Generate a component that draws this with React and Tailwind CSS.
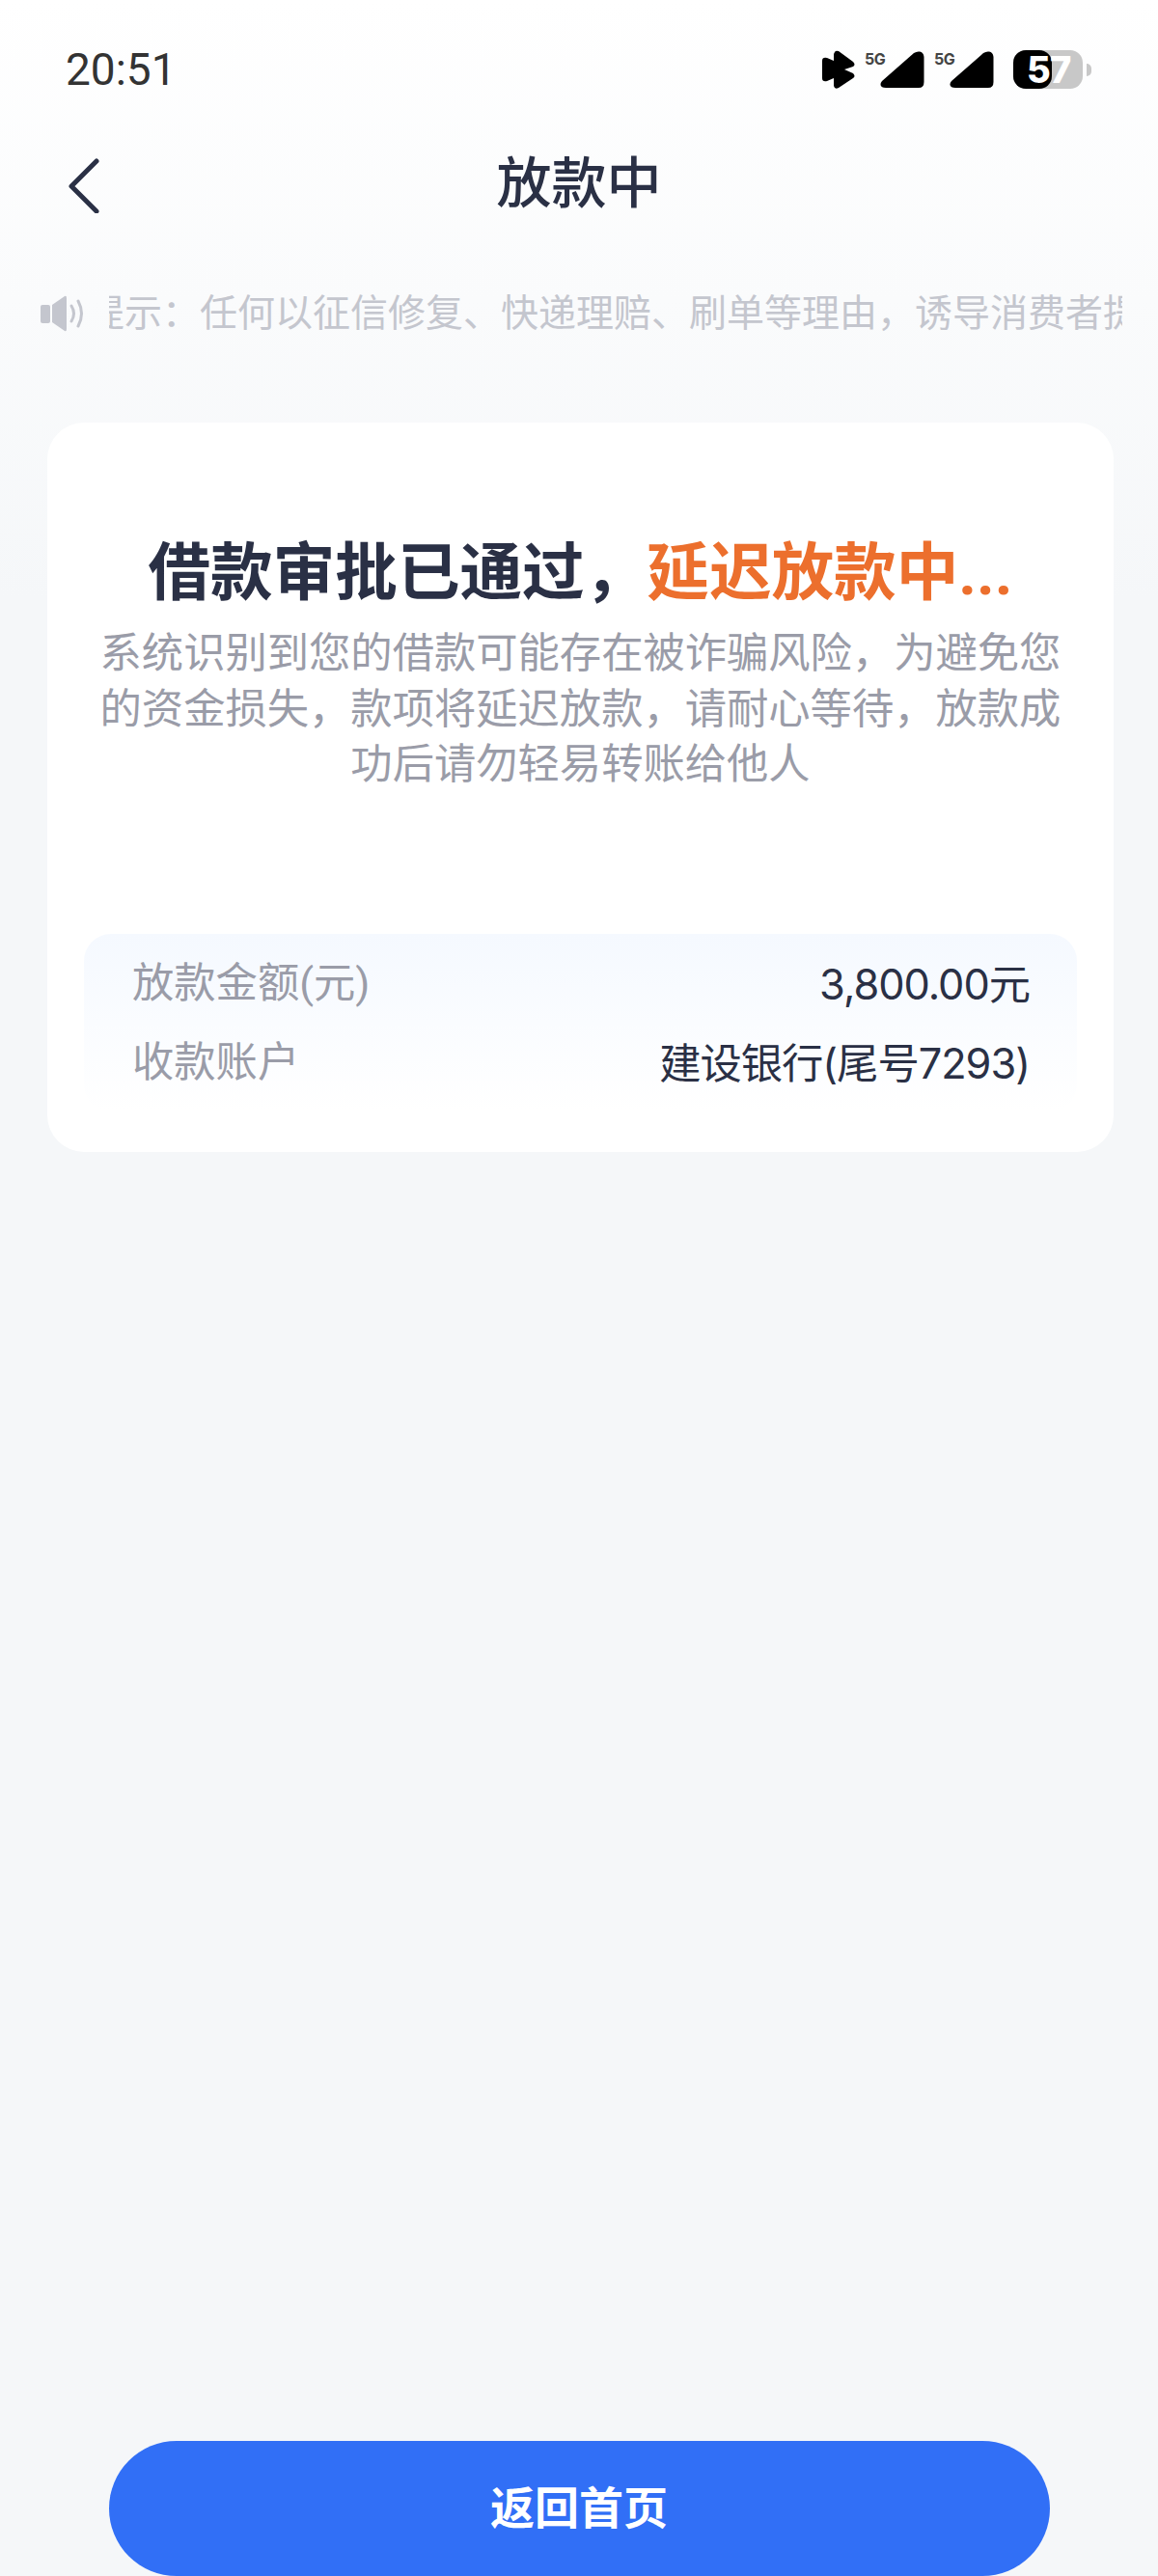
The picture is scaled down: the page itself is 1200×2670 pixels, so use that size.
const CJK = "font-['Roboto','Noto_Sans_CJK_SC',sans-serif]";

function SignalIcon() {
  return (
    <div className="relative w-[62px] h-[40px]">
      <span className="absolute left-0 top-0 text-[16px] leading-[18px] font-bold text-[#444] font-['Inter',sans-serif] tracking-[-0.5px]">5G</span>
      <svg className="absolute right-0 top-0" width="46" height="40" viewBox="0 0 46 40">
        <path d="M2 32 L35 3 Q38 1 41 1.500 Q45 2 45.500 7 L45.500 33 Q45.500 39 40 39 L6 39 Q1 39 0.500 36 Q0.200 34 2 32 Z" fill="#000" />
      </svg>
    </div>
  );
}

function StatusBar() {
  return (
    <div className="flex items-center justify-between h-[72px] pt-[36px] box-content pl-[68px] pr-[69px]">
      <span className="text-[46px] leading-[72px] text-[#333] font-['Roboto',sans-serif]">20:51</span>
      <div className="flex items-center">
        <svg width="34" height="40" viewBox="0 0 34 40">
          <path d="M13 2 Q14 0 17 1 L32 12 Q35 15 32 17 L23 20 L32 24 Q35 27 32 29 L17 39 Q13 41 12 37 L12 29 L5 32 Q0 33 0 29 L0 11 Q0 7 5 8 L12 11 L12 4 Z" fill="#000" />
        </svg>
        <div className="flex items-center gap-[10px] ml-[10px]">
          <SignalIcon />
          <SignalIcon />
        </div>
        <div className="relative ml-[20px] w-[81px] h-[40px]">
          <div className="absolute left-0 top-0 w-[72px] h-[40px] rounded-[13px] bg-[#c8c8c8]" />
          <div className="absolute left-0 top-0 w-[40px] h-[40px] rounded-[13px] bg-black" />
          <span className="absolute left-[38px] top-0 text-[38px] leading-[40px] font-extrabold text-white font-['Inter',sans-serif]">7</span>
          <span className="absolute left-[14px] top-0 text-[38px] leading-[40px] font-extrabold text-white font-['Inter',sans-serif]">5</span>
          <div className="absolute right-0 top-[14px] w-[5px] h-[13px] rounded-r-full bg-[#c8c8c8]" />
        </div>
      </div>
    </div>
  );
}

function Notice() {
  return (
    <div className="flex items-center h-[60px] mt-[64px] pl-[42px] pr-[37px]">
      <svg className="shrink-0" width="46" height="38" viewBox="0 0 46 38" fill="#c4c6ce">
        <rect x="0" y="10" width="10" height="19" rx="2" />
        <path d="M12 10 L25 1 Q27 0 27 3 L27 35 Q27 38 25 37 L12 28 Z" />
        <path d="M32 11 Q37 19 32 27" fill="none" stroke="#c4c6ce" strokeWidth="3" strokeLinecap="round" />
        <path d="M39 6 Q46 19 39 32" fill="none" stroke="#c4c6ce" strokeWidth="3" strokeLinecap="round" />
      </svg>
      <div className="ml-[25px] flex-1 overflow-hidden">
        {/* marquee, frozen part way through the scroll */}
        <p className="-ml-[101px] whitespace-nowrap text-[39px] leading-[60px] text-[#c4c6ce]">
          温馨提示：任何以征信修复、快递理赔、刷单等理由，诱导消费者提供
        </p>
      </div>
    </div>
  );
}

function InfoRow({ label, value }) {
  return (
    <div className="flex items-center justify-between h-[82px]">
      <span className="text-[#9a9ca8]">{label}</span>
      <span className="text-[#2a3045] font-['Inter','Noto_Sans_CJK_SC',sans-serif] tracking-[-1px]">{value}</span>
    </div>
  );
}

export default function App() {
  return (
    <div className={`${CJK} relative w-[1200px] h-[2670px] flex flex-col overflow-hidden bg-[linear-gradient(180deg,#ffffff_0px,#f5f7f9_620px)]`}>
      <StatusBar />

      <div className="relative flex items-center justify-center h-[80px] mt-[43px]">
        <svg className="absolute left-[67px] top-[10px]" width="40" height="60" viewBox="0 0 40 60" fill="none">
          <path d="M33 6 L7 32 L33 58" stroke="#2a3045" strokeWidth="5" strokeLinecap="round" strokeLinejoin="round" />
        </svg>
        <h1 className="text-[57px] leading-[80px] font-medium text-[#2a3045]">放款中</h1>
      </div>

      <Notice />

      <section className="ml-[49px] mr-[46px] mt-[83px] h-[756px] rounded-[38px] bg-white flex flex-col pl-[38px] pr-[38px]">
        <h2 className="mt-[116px] text-center text-[64.600px] leading-[80px] font-bold text-[#2a3045] whitespace-nowrap">
          借款审批已通过，<span className="text-[#ec6f2d]">延迟放款中...</span>
        </h2>
        <p className="mt-[15px] mx-[14px] text-center text-[43.300px] leading-[57.500px] text-[#9a9ca8]">
          系统识别到您的借款可能存在被诈骗风险，为避免您的资金损失，款项将延迟放款，请耐心等待，放款成功后请勿轻易转账给他人
        </p>
        <div className="mt-[146px] h-[184px] rounded-[28px] bg-[linear-gradient(180deg,#f5f9ff,#ffffff)] pl-[50px] pr-[49px] pt-[12px] text-[43.300px]">
          <InfoRow label="放款金额(元)" value="3,800.00元" />
          <InfoRow label="收款账户" value="建设银行(尾号7293)" />
        </div>
      </section>

      <button className="mt-auto mx-auto w-[975px] h-[140px] rounded-full bg-[#316ff6] text-white text-[46px] font-bold">
        返回首页
      </button>
    </div>
  );
}
